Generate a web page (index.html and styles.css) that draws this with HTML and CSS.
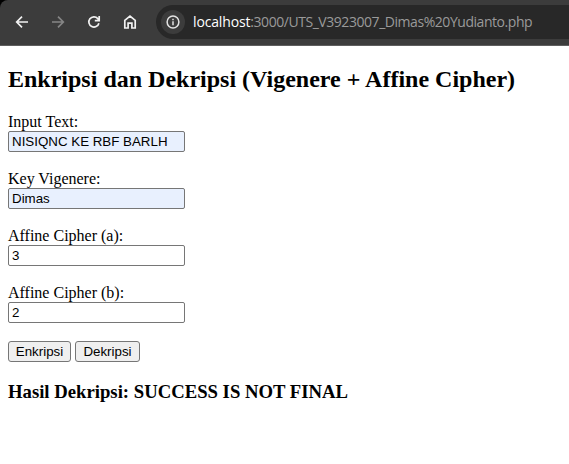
FILE: index.html
```html
<!DOCTYPE html>
<html lang="id">
<head>
<meta charset="utf-8">
<title>Enkripsi dan Dekripsi</title>
<link rel="stylesheet" href="styles.css">
</head>
<body>
<div class="frame">
<header class="toolbar">
  <nav class="nav">
    <svg class="icon" viewBox="0 0 16 16"><path d="M14 8H3M8 2.7 2.7 8 8 13.3"/></svg>
    <svg class="icon icon-dim" viewBox="0 0 16 16"><path d="M2 8h11M8 2.7 13.3 8 8 13.3"/></svg>
    <svg class="icon" viewBox="0 0 16 16"><path d="M12.9 9.2A5.1 5.1 0 1 1 11.8 4.6L13 6M13.2 2v4.6H8.8"/></svg>
    <svg class="icon" viewBox="0 0 16 16"><path d="M2.8 14V6.3L8 2.2l5.2 4.1V14H9.9V9.2H6.1V14z"/></svg>
  </nav>
  <div class="address">
    <span class="info"><svg class="info-icon" viewBox="0 0 14 14"><circle cx="7" cy="7" r="5.9"/><path d="M7 6.3v3.9M7 3.7v1.5"/></svg></span>
    <span class="url"><span class="host">localhost</span>:3000/UTS_V3923007_Dimas%20Yudianto.php</span>
  </div>
</header>
</div>
<main class="page">
  <h2 class="title">Enkripsi dan Dekripsi (Vigenere + Affine Cipher)</h2>
  <form class="form">
    <label class="field">Input Text:<input class="input filled" type="text" value="NISIQNC KE RBF BARLH"></label>
    <label class="field">Key Vigenere:<input class="input filled" type="text" value="Dimas"></label>
    <label class="field">Affine Cipher (a):<input class="input" type="text" value="3"></label>
    <label class="field">Affine Cipher (b):<input class="input" type="text" value="2"></label>
    <div class="actions">
      <button class="button" type="button">Enkripsi</button>
      <button class="button button-wide" type="button">Dekripsi</button>
    </div>
  </form>
  <h3 class="result">Hasil Dekripsi: SUCCESS IS NOT FINAL</h3>
</main>
</body>
</html>
```
FILE: styles.css
```css
* { box-sizing: border-box; }
body {
  margin: 0;
  height: 464px;
  overflow: hidden;
  background: #fff;
  color: #000;
  font: 16px/18px "Liberation Serif", serif;
  font-variant-ligatures: none;
}
.frame { background: linear-gradient(#000 50%, #3c3c3c 50%); }
.toolbar {
  display: flex;
  align-items: flex-start;
  height: 46px;
  background: #3c3c3c;
  border-bottom: 1px solid #5e5e5e;
  border-top-left-radius: 8px;
}
.nav {
  display: flex;
  gap: 20px;
  width: 156px;
  padding: 14px 0 0 14px;
}
.icon {
  width: 16px;
  height: 16px;
  fill: none;
  stroke: #f1f1f1;
  stroke-width: 1.7;
}
.icon-dim { stroke: #858585; }
.address {
  flex: 1;
  display: flex;
  align-items: center;
  height: 34px;
  margin-top: 5px;
  padding-left: 5px;
  background: #282828;
  border-radius: 17px 0 0 17px;
}
.info {
  display: flex;
  align-items: center;
  justify-content: center;
  width: 24px;
  height: 24px;
  border-radius: 50%;
  background: #3c3c3c;
}
.info-icon {
  width: 14px;
  height: 14px;
  fill: none;
  stroke: #e3e3e3;
  stroke-width: 1.5;
}
.url {
  margin-left: 8px;
  color: #9a9a9a;
  font: 14px/20px "Open Sans", sans-serif;
  letter-spacing: -0.45px;
  white-space: nowrap;
}
.host { color: #fff; letter-spacing: -0.15px; }
.page { padding: 20px 8px 0; }
.title {
  margin: 0 0 20px;
  font-size: 24px;
  line-height: 27px;
}
.field { display: block; margin-bottom: 18px; }
.input {
  display: block;
  width: 177px;
  height: 21px;
  padding: 1px 3px;
  border: 1px solid #767676;
  border-radius: 2px;
  outline: 0;
  background: #fff;
  color: #000;
  font: 13.333px "Liberation Sans", sans-serif;
}
.filled { background: #e8f0fe; }
.actions { display: flex; gap: 4px; }
.button {
  width: 63px;
  height: 21px;
  padding: 0;
  border: 1px solid #767676;
  border-radius: 3px;
  background: #efefef;
  color: #000;
  font: 13.333px "Liberation Sans", sans-serif;
}
.button-wide { width: 65px; }
.result {
  margin: 19px 0 0;
  font-size: 18.72px;
  line-height: 22px;
}
```
